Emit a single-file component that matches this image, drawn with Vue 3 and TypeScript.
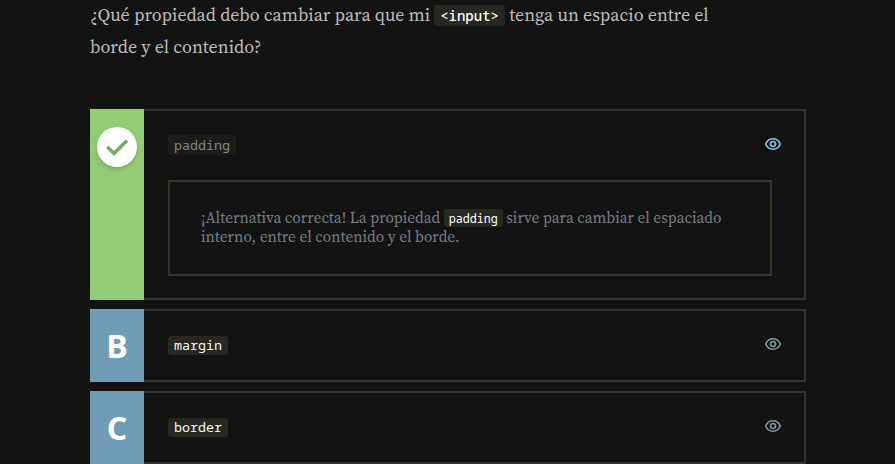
<script setup lang="ts">
interface Choice {
  letter: string
  label: string
  correct: boolean
}

const choices: Choice[] = [
  { letter: 'A', label: 'padding', correct: true },
  { letter: 'B', label: 'margin', correct: false },
  { letter: 'C', label: 'border', correct: false },
]
</script>

<template>
  <main class="exercise">
    <p class="question">
      <span>¿Qué propiedad debo cambiar para que mi</span>
      <code>&lt;input&gt;</code>
      <span class="tail">tenga un espacio entre el</span><br />
      <span>borde y el contenido?</span>
    </p>

    <ul class="choices">
      <li v-for="choice in choices" :key="choice.letter" class="choice" :class="{ correct: choice.correct }">
        <div class="marker">
          <span v-if="choice.correct" class="check">
            <svg width="40" height="40" viewBox="0 0 40 40" fill="none" stroke="#7fa86c" stroke-width="3.6">
              <path d="M10.2 19.7 17 26.4 30 13.4" />
            </svg>
          </span>
          <span v-else class="letter">{{ choice.letter }}</span>
        </div>
        <div class="body">
          <div class="head">
            <code>{{ choice.label }}</code>
            <svg class="eye" width="18" height="14" viewBox="0 0 18 14" fill="none" stroke="currentColor" stroke-width="1.6">
              <path d="M1.7 7C3.1 3.5 5.8 1.8 9 1.8S14.9 3.5 16.3 7C14.9 10.5 12.2 12.2 9 12.2S3.1 10.5 1.7 7Z" />
              <circle cx="9" cy="7" r="2.5" />
            </svg>
          </div>
          <p v-if="choice.correct" class="opinion">
            <span>¡Alternativa correcta! La propiedad</span>
            <code>padding</code>
            <span>sirve para cambiar el espaciado</span><br />
            <span>interno, entre el contenido y el borde.</span>
          </p>
        </div>
      </li>
    </ul>
  </main>
</template>

<style>
body {
  background: #131313;
  overflow: hidden;
}
</style>

<style scoped>
.exercise {
  width: 716px;
  margin-left: 90px;
  height: 464px;
  overflow: hidden;
  font-family: "Source Serif Pro", "Source Serif 4", "Liberation Serif", serif;
}
.question {
  margin: -1px 0 0;
  height: 110px;
  font-size: 18px;
  line-height: 32px;
  color: #bdbdbd;
  white-space: nowrap;
}
code {
  font-family: "Noto Sans Mono", "DejaVu Sans Mono", monospace;
  color: #fff;
  background: #272822;
  border-radius: 3px;
}
.question code {
  display: inline-block;
  box-sizing: border-box;
  width: 71px;
  height: 21px;
  margin: 0 4px;
  padding: 0 6px;
  font-size: 14px;
  font-weight: 500;
  line-height: 21px;
}
.choices {
  margin: 0;
  padding: 0;
  list-style: none;
  display: flex;
  flex-direction: column;
  gap: 9px;
}
.choice {
  display: flex;
  height: 73px;
}
.choice.correct {
  height: 191px;
}
.marker {
  width: 54px;
  flex: none;
  display: flex;
  justify-content: center;
  align-items: center;
  background: #709db5;
}
.correct .marker {
  align-items: flex-start;
  background: #93cc76;
}
.check {
  width: 40px;
  height: 40px;
  margin-top: 18px;
  border-radius: 50%;
  background: #fff;
  box-shadow: 0 2px 4px rgba(0, 0, 0, 0.2);
}
.check svg {
  display: block;
}
.letter {
  font: bold 32px/40px "Open Sans", sans-serif;
  color: #fff;
}
.body {
  flex: 1;
  box-sizing: border-box;
  border: 2px solid #333;
  border-left: 0;
  padding: 24px 22px 0 24px;
}
.head {
  display: flex;
  justify-content: space-between;
  align-items: flex-start;
  height: 20px;
}
.head code {
  height: 19px;
  margin-top: 1px;
  padding: 0 6px;
  font-size: 13.33px;
  line-height: 19px;
  color: #f8f8f2;
}
.correct .head code {
  height: 20px;
  margin-top: 0;
  line-height: 20px;
  color: #858585;
  background: #1c1c1b;
}
.eye {
  margin: 2px 0 0;
  color: #7d98a5;
}
.correct .eye {
  color: #8ac6e6;
}
.opinion {
  margin: 25px 10px 0 0;
  box-sizing: border-box;
  height: 96px;
  border: 2px solid #2b3a25;
  padding: 26px 31px 0;
  font-size: 15.35px;
  line-height: 19px;
  color: #757d85;
  white-space: nowrap;
}
.opinion code {
  display: inline-block;
  box-sizing: border-box;
  width: 59px;
  height: 18px;
  margin: 0 3.5px;
  padding: 0 5px;
  font-size: 11.7px;
  line-height: 19px;
}
</style>
